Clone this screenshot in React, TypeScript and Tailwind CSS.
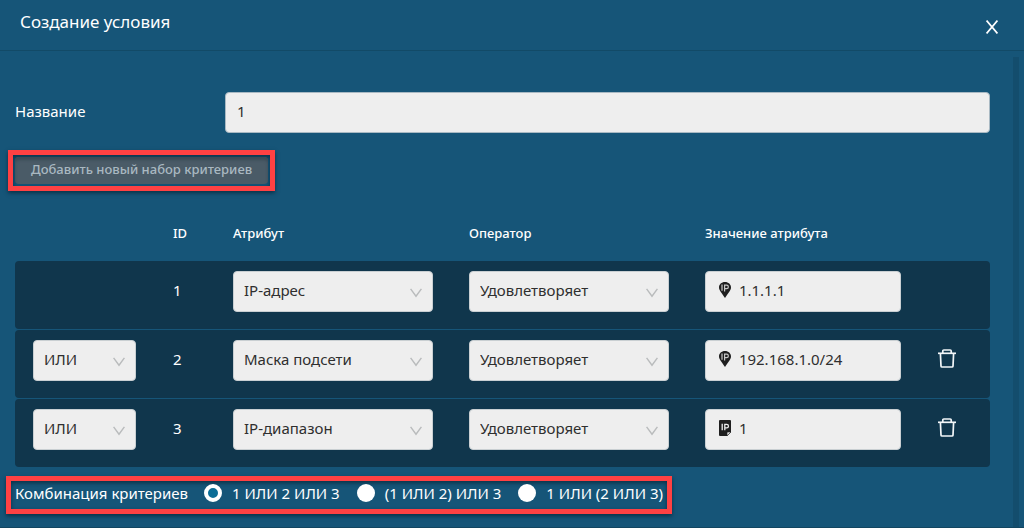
import { useState } from "react";

type Criterion = {
  id: number;
  joined: boolean;
  attribute: string;
  value: string;
  icon: "pin" | "page";
};

const criteria: Criterion[] = [
  { id: 1, joined: false, attribute: "IP-адрес", value: "1.1.1.1", icon: "pin" },
  { id: 2, joined: true, attribute: "Маска подсети", value: "192.168.1.0/24", icon: "pin" },
  { id: 3, joined: true, attribute: "IP-диапазон", value: "1", icon: "page" },
];

const attributes = ["IP-адрес", "Маска подсети", "IP-диапазон"];
const combinations = ["1 ИЛИ 2 ИЛИ 3", "(1 ИЛИ 2) ИЛИ 3", "1 ИЛИ (2 ИЛИ 3)"];

function Select({ label, value, options }: { label: string; value: string; options: string[] }) {
  return (
    <div className="relative">
      <select
        aria-label={label}
        defaultValue={value}
        className="block h-[41px] w-full appearance-none rounded border border-[#c9cfd2] bg-[#eeeeee] pr-8 pb-[3px] pl-[10px] text-[#2f2f2f]"
      >
        {options.map((o) => (
          <option key={o}>{o}</option>
        ))}
      </select>
      <svg
        viewBox="0 0 12 10"
        className="pointer-events-none absolute top-[17px] right-[11px] h-[10px] w-3"
        fill="none"
        stroke="#b9bbbc"
        strokeWidth="1.4"
      >
        <path d="M0.6 0.8 6 8.2 11.4 0.8" />
      </svg>
    </div>
  );
}

function PinIcon() {
  return (
    <svg viewBox="0 0 12 16" className="h-4 w-3 shrink-0">
      <path d="M6 0C2.500 0 0 2.400 0 5.500 0 8.600 3.400 11.500 6 16c2.600-4.500 6-7.400 6-10.500C12 2.400 9.500 0 6 0Z" fill="#1f1f1f" />
      <path d="M3 2.600v6.200M5.600 9.400V3.200h2a1.700 1.700 0 0 1 0 3.500H5.600" fill="none" stroke="#c8c8c8" strokeWidth="1.200" />
    </svg>
  );
}

function PageIcon() {
  return (
    <svg viewBox="0 0 12 16" className="h-4 w-3 shrink-0">
      <path d="M1 0h10a1 1 0 0 1 1 1v10.800L8 16H1a1 1 0 0 1-1-1V1a1 1 0 0 1 1-1Z" fill="#1f1f1f" />
      <path d="M8 15.800V12.800a.8.8 0 0 1 .8-.8H12Z" fill="#eeeeee" stroke="#1f1f1f" strokeWidth=".7" />
      <path d="M3.200 3.800v6.400M5.800 10.200V4.400h1.900a1.700 1.700 0 0 1 0 3.500H5.800" fill="none" stroke="#eeeeee" strokeWidth="1.300" />
    </svg>
  );
}

function TrashIcon() {
  return (
    <svg viewBox="0 0 18 19" className="h-[19px] w-[18px]" fill="none" stroke="#f2f6f8" strokeWidth="1.700">
      <path d="M0 4.300h18" />
      <path d="M4.800 4V2A1 1 0 0 1 5.800 1h6.400a1 1 0 0 1 1 1V4" />
      <path d="M2.400 4.500l.6 12.600a1 1 0 0 0 1 .9h10a1 1 0 0 0 1-.9l.6-12.600" />
    </svg>
  );
}

export default function App() {
  const [combination, setCombination] = useState(combinations[0]);

  return (
    <div className="flex min-h-screen flex-col border-b border-[#124661] bg-[#165578] font-['Noto_Sans',sans-serif] text-[15px] leading-6 text-white">
      <header className="flex h-[51px] items-center justify-between border-b border-[#124a67] pr-[26px] pl-5">
        <h1 className="pb-1.5 text-[17px]">Создание условия</h1>
        <button type="button" aria-label="Закрыть" className="mt-1 flex h-4 w-3 items-center justify-center">
          <svg viewBox="0 0 12 14" className="h-[14px] w-3 shrink-0" fill="none" stroke="white" strokeWidth="1.700">
            <path d="M.6.6 11.400 13.400M11.400.6.6 13.400" />
          </svg>
        </button>
      </header>

      <div className="flex grow pr-[5px]">
        <main className="min-w-0 grow pr-[23px] pl-[15px]">
          <div className="flex items-center pt-[41px]">
            <label htmlFor="name" className="w-[210px] shrink-0 pb-1">
              Название
            </label>
            <input
              id="name"
              defaultValue="1"
              className="h-[41px] min-w-0 grow rounded border border-[#a9b9c3] bg-[#eeeeee] px-[11px] pb-[3px] text-[#2f2f2f]"
            />
          </div>

          <div className="mt-[17px] -ml-[7px] w-fit border-5 border-[#ff4143] shadow-[0_2px_4px_#0b3046,inset_0_2px_4px_#0b3046]">
            <button
              type="button"
              className="m-[2px] block h-[27px] rounded-sm bg-[#4a5b67] px-4 pb-[3px] text-[13px] leading-5 font-medium text-[#a9b8c1] shadow-[inset_0_3px_3px_#3a4a56]"
            >
              Добавить новый набор критериев
            </button>
          </div>

          <table className="mt-[14px] w-full table-fixed border-separate border-spacing-x-0 border-spacing-y-px text-left">
            <thead>
              <tr className="h-[54px] text-[13px]">
                <td className="w-[158px]" />
                <th className="w-[60px] font-medium">ID</th>
                <th className="w-[24.2%] font-medium">Атрибут</th>
                <th className="w-[24.2%] font-medium">Оператор</th>
                <th className="font-medium">Значение атрибута</th>
                <td className="w-[64px]" />
              </tr>
            </thead>
            <tbody>
              {criteria.map((c) => (
                <tr key={c.id} className="h-[68px] *:bg-[#10364c] *:pt-[10px] *:align-top">
                  <td className="rounded-l pr-[37px] pl-[18px]">
                    {c.joined && <Select label="Связка" value="ИЛИ" options={["ИЛИ", "И"]} />}
                  </td>
                  <td>
                    <div className="flex h-[41px] items-center pb-[3px]">{c.id}</div>
                  </td>
                  <td className="pr-9">
                    <Select label="Атрибут" value={c.attribute} options={attributes} />
                  </td>
                  <td className="pr-9">
                    <Select label="Оператор" value="Удовлетворяет" options={["Удовлетворяет"]} />
                  </td>
                  <td className="pr-[25px]">
                    <label className="flex h-[41px] items-center gap-2 rounded border border-[#c9cfd2] bg-[#eeeeee] px-[13px] pb-[3px] text-[#2f2f2f]">
                      {c.icon === "pin" ? <PinIcon /> : <PageIcon />}
                      <input
                        aria-label="Значение атрибута"
                        defaultValue={c.value}
                        className="w-full min-w-0 bg-transparent outline-none"
                      />
                    </label>
                  </td>
                  <td className="rounded-r">
                    {c.joined && (
                      <button type="button" aria-label="Удалить" className="ml-3 flex h-9 items-center">
                        <TrashIcon />
                      </button>
                    )}
                  </td>
                </tr>
              ))}
            </tbody>
          </table>

          <div
            role="radiogroup"
            aria-labelledby="combination-title"
            className="mt-2 -ml-[9px] flex h-[38px] w-fit items-center border-5 border-[#ff4143] px-1 pb-1 shadow-[0_2px_4px_#0b3046,inset_0_2px_4px_#0b3046]"
          >
            <span id="combination-title" className="mr-4">
              Комбинация критериев
            </span>
            <div className="flex gap-[17px]">
              {combinations.map((c) => (
                <label key={c} className="flex items-center gap-[10px]">
                  <input
                    type="radio"
                    name="combination"
                    checked={combination === c}
                    onChange={() => setCombination(c)}
                    className="size-[18px] shrink-0 appearance-none rounded-full bg-white checked:border-4 checked:border-white checked:bg-[#0b6d96]"
                  />
                  {c}
                </label>
              ))}
            </div>
          </div>
        </main>
        <div className="mt-[6px] w-[6px] shrink-0 bg-[#134d6d]" />
      </div>
    </div>
  );
}
